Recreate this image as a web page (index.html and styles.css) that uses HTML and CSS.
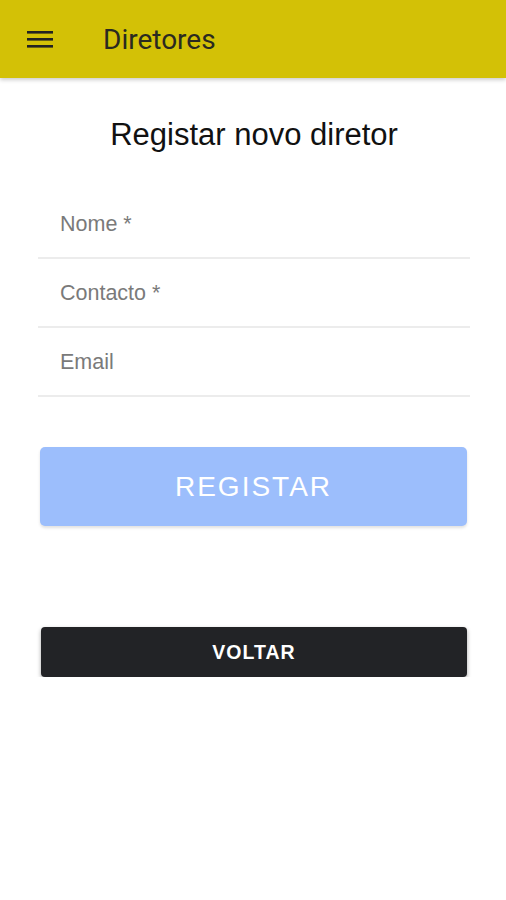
FILE: index.html
```html
<!DOCTYPE html>
<html lang="pt">
<head>
    <meta charset="UTF-8">
    <meta name="viewport" content="width=device-width, initial-scale=1.0">
    <title>Diretores</title>
    <link rel="stylesheet" href="styles.css">
</head>
<body>
    <header class="topbar">
        <button class="menu-btn" aria-label="menu">
            <svg width="26" height="18" viewBox="0 0 26 18">
                <rect x="0" y="1" width="26" height="2.6" fill="#222"/>
                <rect x="0" y="8" width="26" height="2.6" fill="#222"/>
                <rect x="0" y="15" width="26" height="2.6" fill="#222"/>
            </svg>
        </button>
        <span class="topbar-title">Diretores</span>
    </header>

    <main class="content">
        <h2 class="form-title">Registar novo diretor</h2>
        <form class="form">
            <div class="field"><input type="text" placeholder="Nome *"></div>
            <div class="field"><input type="text" placeholder="Contacto *"></div>
            <div class="field"><input type="email" placeholder="Email"></div>
            <button type="button" class="btn btn-primary">REGISTAR</button>
            <button type="button" class="btn btn-dark">VOLTAR</button>
        </form>
    </main>
</body>
</html>
```

FILE: styles.css
```css
body {
    margin: 0;
    padding: 0;
    background: #fff;
    font-family: "Liberation Sans", Arial, sans-serif;
    color: #111;
}
.topbar {
    height: 78px;
    background-color: #d3c106;
    display: flex;
    align-items: center;
    padding-left: 27px;
    box-shadow: 0 2px 4px rgba(0, 0, 0, 0.2);
}
.menu-btn {
    background: none;
    border: none;
    padding: 0;
    width: 26px;
    height: 18px;
    display: flex;
}
.topbar-title {
    font-family: Roboto, sans-serif;
    font-size: 28px;
    color: #2a2a20;
    margin-left: 50px;
}
.content {
    padding: 0 38px 0 38px;
    width: 432px;
}
.form-title {
    margin: 37px 0 0 0;
    font-weight: normal;
    font-size: 31px;
    text-align: center;
    color: #111;
    line-height: 40px;
}
.form {
    margin-top: 35px;
    display: flex;
    flex-direction: column;
}
.field {
    height: 67px;
    border-bottom: 2px solid #ececec;
    display: flex;
    align-items: center;
}
.field input {
    border: none;
    outline: none;
    width: 100%;
    padding: 0 0 0 22px;
    font-family: "Liberation Sans", Arial, sans-serif;
    font-size: 21.5px;
    color: #333;
    background: transparent;
    margin-top: 1px;
}
.field input::placeholder {
    color: #7a7a7a;
}
.btn {
    border: none;
    color: #fff;
    font-family: "Liberation Sans", Arial, sans-serif;
    margin-left: 2px;
    width: 427px;
}
.btn-primary {
    margin-top: 50px;
    height: 79px;
    background-color: #9cbefc;
    border-radius: 5px;
    font-size: 28px;
    letter-spacing: 2px;
    box-shadow: 0 2px 3px rgba(0, 0, 0, 0.12);
}
.btn-dark {
    margin-top: 101px;
    height: 50px;
    background-color: #222326;
    border-radius: 4px;
    font-size: 19.5px;
    font-weight: bold;
    letter-spacing: 1px;
    box-shadow: 0 2px 4px rgba(0, 0, 0, 0.35);
    margin-left: 3px;
    width: 426px;
}
```
